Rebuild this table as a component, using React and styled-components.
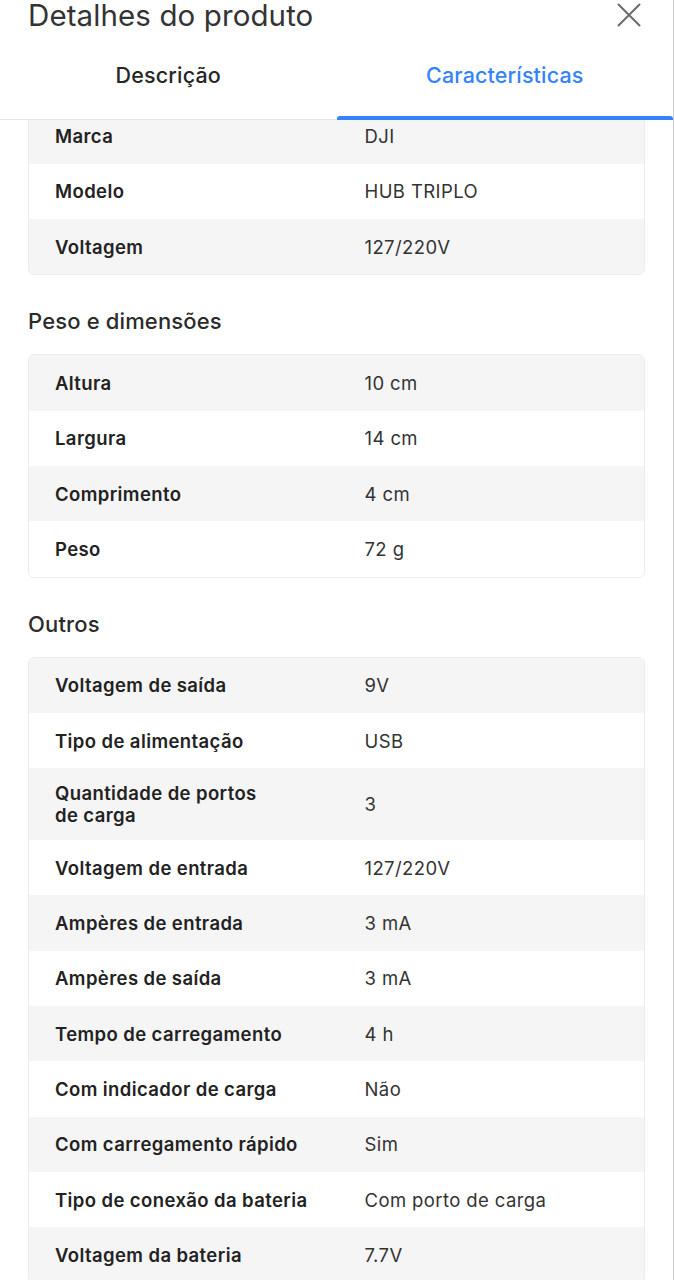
import React from "react";
import styled, { createGlobalStyle } from "styled-components";

const GlobalStyle = createGlobalStyle`
  html, body { margin: 0; padding: 0; background: #ffffff; }
  body { font-family: Inter, "Noto Sans", Arial, sans-serif; -webkit-font-smoothing: antialiased; }
  * { box-sizing: border-box; }
`;

const Page = styled.div`
  width: 674px;
  height: 1280px;
  overflow: hidden;
  background: #ffffff;
  border-right: 1px solid #c9c9c9;
  display: flex;
  flex-direction: column;
`;

const Header = styled.header`
  flex: none;
  background: #ffffff;
  border-bottom: 1px solid #e6e6e6;
`;

const TitleRow = styled.div`
  display: flex;
  align-items: center;
  justify-content: space-between;
  height: 32px;
  margin-top: -1px;
  padding: 0 31px 0 28px;
`;

const Title = styled.h1`
  margin: 0;
  font-size: 29.5px;
  line-height: 32px;
  font-weight: 400;
  color: #333333;
  letter-spacing: 0.1px;
`;

const CloseButton = styled.button`
  border: none;
  background: none;
  padding: 0;
  width: 26px;
  height: 26px;
  display: flex;
  align-items: center;
  justify-content: center;
  color: #6b6b6b;
  cursor: pointer;
`;

const Tabs = styled.nav`
  display: grid;
  grid-template-columns: 1fr 1fr;
  height: 88px;
`;

const Tab = styled.div`
  position: relative;
  display: flex;
  align-items: center;
  justify-content: center;
  font-size: 21.5px;
  font-weight: 500;
  letter-spacing: 0.15px;
  color: ${(p) => (p.$active ? "#3483fa" : "#262626")};

  &::after {
    content: "";
    display: ${(p) => (p.$active ? "block" : "none")};
    position: absolute;
    left: 0;
    right: 0;
    bottom: -1px;
    height: 4px;
    background: #3483fa;
    border-radius: 3px 3px 0 0;
  }
`;

const Scroller = styled.main`
  flex: 1;
  overflow: hidden;
  padding: 0 28px;
`;

const ScrollContent = styled.div`
  margin-top: -12.5px;
`;

const SectionTitle = styled.h2`
  margin: 33px 0 20px;
  font-size: 22px;
  line-height: 26px;
  font-weight: 500;
  letter-spacing: 0.15px;
  color: #2b2b2b;
`;

const Card = styled.div`
  border: 1px solid #ececec;
  border-radius: 6px;
  overflow: hidden;
  background: #ffffff;
`;

const Row = styled.div`
  display: grid;
  grid-template-columns: 1fr 1fr;
  align-items: center;
  min-height: 55.3px;
  background: ${(p) => (p.$odd ? "#f5f5f5" : "#ffffff")};
`;

const Label = styled.div`
  padding: 14px 10px 14px 26px;
  font-size: 18.5px;
  line-height: 22px;
  font-weight: 600;
  letter-spacing: 0.4px;
  color: #222222;
  white-space: pre-line;
`;

const Value = styled.div`
  padding: 14px 20px 14px 28px;
  font-size: 18.5px;
  line-height: 22px;
  font-weight: 400;
  letter-spacing: 0.4px;
  color: #333333;
`;

const CloseIcon = () => (
  <svg width="24" height="24" viewBox="0 0 24 24" fill="none">
    <path d="M1.5 1.5 L22.5 22.5 M22.5 1.5 L1.5 22.5" stroke="currentColor" strokeWidth="2" strokeLinecap="round" />
  </svg>
);

const sections = [
  {
    title: null,
    rows: [
      ["Marca", "DJI"],
      ["Modelo", "HUB TRIPLO"],
      ["Voltagem", "127/220V"],
    ],
  },
  {
    title: "Peso e dimensões",
    rows: [
      ["Altura", "10 cm"],
      ["Largura", "14 cm"],
      ["Comprimento", "4 cm"],
      ["Peso", "72 g"],
    ],
  },
  {
    title: "Outros",
    rows: [
      ["Voltagem de saída", "9V"],
      ["Tipo de alimentação", "USB"],
      ["Quantidade de portos\nde carga", "3"],
      ["Voltagem de entrada", "127/220V"],
      ["Ampères de entrada", "3 mA"],
      ["Ampères de saída", "3 mA"],
      ["Tempo de carregamento", "4 h"],
      ["Com indicador de carga", "Não"],
      ["Com carregamento rápido", "Sim"],
      ["Tipo de conexão da bateria", "Com porto de carga"],
      ["Voltagem da bateria", "7.7V"],
    ],
  },
];

export default function App() {
  return (
    <>
      <GlobalStyle />
      <Page>
        <Header>
          <TitleRow>
            <Title>Detalhes do produto</Title>
            <CloseButton aria-label="Fechar">
              <CloseIcon />
            </CloseButton>
          </TitleRow>
          <Tabs>
            <Tab>Descrição</Tab>
            <Tab $active>Características</Tab>
          </Tabs>
        </Header>
        <Scroller>
          <ScrollContent>
            {sections.map((s, i) => (
              <section key={i}>
                {s.title && <SectionTitle>{s.title}</SectionTitle>}
                <Card>
                  {s.rows.map(([k, v], j) => (
                    <Row key={k} $odd={j % 2 === 0}>
                      <Label>{k}</Label>
                      <Value>{v}</Value>
                    </Row>
                  ))}
                </Card>
              </section>
            ))}
          </ScrollContent>
        </Scroller>
      </Page>
    </>
  );
}
